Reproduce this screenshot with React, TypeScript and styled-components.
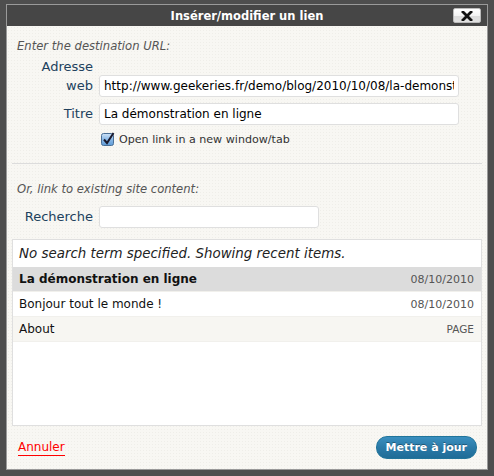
import { FC } from 'react';
import styled, { createGlobalStyle } from 'styled-components';

const GlobalStyle = createGlobalStyle`
html, body {
    margin: 0;
    padding: 0;
    background: #4e4e4e;
}
body {
    font-family: "DejaVu Sans", Verdana, sans-serif;
    color: #333;
}
* { box-sizing: border-box; }
`;

const Page = styled.div`
width: 494px;
height: 476px;
padding: 4px 6px;
background: #4e4e4e;
`;

const Dialog = styled.div`
width: 482px;
height: 466px;
border: 1px solid #9a9a9a;
display: flex;
flex-direction: column;
background-color: #f8f7f3;
background-image: radial-gradient(#efeee9 0.6px, transparent 0.6px);
background-size: 3px 3px;
`;

const TitleBar = styled.div`
height: 21px;
background: #464646;
display: grid;
grid-template-columns: 1fr auto 1fr;
align-items: center;
`;

const Title = styled.div`
grid-column: 2;
color: #fff;
font-weight: bold;
font-size: 11.5px;
`;

const CloseButton = styled.button`
grid-column: 3;
justify-self: end;
margin-right: 6px;
width: 28px;
height: 15px;
padding: 0;
border: 1px solid #bbb;
border-radius: 2px;
background: linear-gradient(#ffffff 0%, #f3f3f3 55%, #dcdcdc 56%, #e2e2e2 100%);
display: flex;
align-items: center;
justify-content: center;
`;

const Body = styled.div`
flex: 1;
display: flex;
flex-direction: column;
padding: 13px 5px 0 5px;
`;

const Hint = styled.div<{ $top?: number }>`
font-style: italic;
font-size: 11.6px;
color: #555;
padding-left: 5px;
line-height: 14px;
margin-top: ${p => p.$top ?? 0}px;
`;

const FieldRow = styled.div<{ $top?: number }>`
display: flex;
align-items: flex-end;
gap: 6px;
margin-top: ${p => p.$top ?? 6}px;
`;

const Label = styled.label<{ $width: number }>`
width: ${p => p.$width}px;
flex: none;
text-align: right;
font-size: 13px;
line-height: 19px;
color: #21415d;
padding-bottom: 2px;
`;

const TextInput = styled.input<{ $width: number }>`
width: ${p => p.$width}px;
height: 22px;
border: 1px solid #dfdfdf;
border-radius: 3px;
background: #fff;
padding: 0 4px;
font-family: "DejaVu Sans", Verdana, sans-serif;
font-size: 12px;
color: #000;
outline: none;
`;

const CheckRow = styled.label`
display: flex;
align-items: center;
gap: 4px;
margin: 7px 0 0 89px;
font-size: 11.1px;
color: #333;
`;

const Separator = styled.hr`
border: none;
border-top: 1px solid #dcdcdc;
margin: 17px 0 0 0;
`;

const ResultsBox = styled.div`
margin-top: 11px;
height: 187px;
border: 1px solid #dfdfdf;
background: #fff;
display: flex;
flex-direction: column;
`;

const Notice = styled.div`
height: 27px;
line-height: 27px;
padding-left: 6px;
font-style: italic;
font-size: 13.4px;
color: #222;
`;

const ResultRow = styled.div<{ $bg: string; $bold?: boolean }>`
height: 25px;
display: flex;
align-items: center;
justify-content: space-between;
padding: 0 7px 0 6px;
background: ${p => p.$bg};
border-bottom: 1px solid #f1f0ec;
font-size: 12px;
color: #111;
font-weight: ${p => (p.$bold ? 'bold' : 'normal')};
`;

const Meta = styled.span<{ $small?: boolean }>`
font-weight: normal;
color: #555;
font-size: ${p => (p.$small ? '10.5px' : '11px')};
`;

const Footer = styled.div`
display: flex;
align-items: center;
justify-content: space-between;
padding: 10px 5px 0 6px;
`;

const CancelLink = styled.a`
color: #ff0000;
font-size: 12px;
text-decoration: none;
border-bottom: 1px solid #ff0000;
padding-bottom: 1px;
line-height: 14px;
`;

const PrimaryButton = styled.button`
height: 23px;
padding: 0 9px;
border: 1px solid #21759b;
border-radius: 11px;
background: linear-gradient(#3a8fbf, #2a7aa8 50%, #1f6c97);
color: #fff;
font-family: "DejaVu Sans", Verdana, sans-serif;
font-weight: bold;
font-size: 11px;
text-shadow: 0 -1px 0 rgba(0, 0, 0, 0.35);
`;

const CloseIcon: FC = () => (
    <svg width="12" height="10" viewBox="0 0 12 10">
        <path d="M2 1 L10 9 M10 1 L2 9" stroke="#111" strokeWidth="2.8" strokeLinecap="square" />
    </svg>
);

const CheckIcon: FC = () => (
    <svg width="14" height="14" viewBox="0 0 14 14">
        <defs>
            <linearGradient id="cb" x1="0" y1="0" x2="0" y2="1">
                <stop offset="0" stopColor="#cfe3f7" />
                <stop offset="0.5" stopColor="#8ab8e6" />
                <stop offset="1" stopColor="#5d9ad6" />
            </linearGradient>
        </defs>
        <rect x="0.5" y="1.5" width="12" height="12" rx="2" fill="url(#cb)" stroke="#4a6f96" />
        <path d="M3 7.5 L6 11 L12.5 1" stroke="#1a1a2e" strokeWidth="2" fill="none" />
    </svg>
);

const results = [
    { title: 'La démonstration en ligne', meta: '08/10/2010', bg: '#dcdcdc', bold: true },
    { title: 'Bonjour tout le monde !', meta: '08/10/2010', bg: '#ffffff' },
    { title: 'About', meta: 'PAGE', bg: '#f7f6f2', small: true },
];

export default function App() {
    return (
        <Page>
            <GlobalStyle />
            <Dialog>
                <TitleBar>
                    <Title>Insérer/modifier un lien</Title>
                    <CloseButton><CloseIcon /></CloseButton>
                </TitleBar>
                <Body>
                    <Hint>Enter the destination URL:</Hint>
                    <FieldRow $top={4}>
                        <Label $width={81}>Adresse web</Label>
                        <TextInput $width={360} defaultValue="http://www.geekeries.fr/demo/blog/2010/10/08/la-demonstration-en-ligne/" />
                    </FieldRow>
                    <FieldRow>
                        <Label $width={81}>Titre</Label>
                        <TextInput $width={360} defaultValue="La démonstration en ligne" />
                    </FieldRow>
                    <CheckRow>
                        <CheckIcon />
                        Open link in a new window/tab
                    </CheckRow>
                    <Separator />
                    <Hint $top={18}>Or, link to existing site content:</Hint>
                    <FieldRow $top={10}>
                        <Label $width={81}>Recherche</Label>
                        <TextInput $width={220} />
                    </FieldRow>
                    <ResultsBox>
                        <Notice>No search term specified. Showing recent items.</Notice>
                        {results.map(r => (
                            <ResultRow key={r.title} $bg={r.bg} $bold={r.bold}>
                                <span>{r.title}</span>
                                <Meta $small={r.small}>{r.meta}</Meta>
                            </ResultRow>
                        ))}
                    </ResultsBox>
                    <Footer>
                        <CancelLink href="#">Annuler</CancelLink>
                        <PrimaryButton>Mettre à jour</PrimaryButton>
                    </Footer>
                </Body>
            </Dialog>
        </Page>
    );
}
